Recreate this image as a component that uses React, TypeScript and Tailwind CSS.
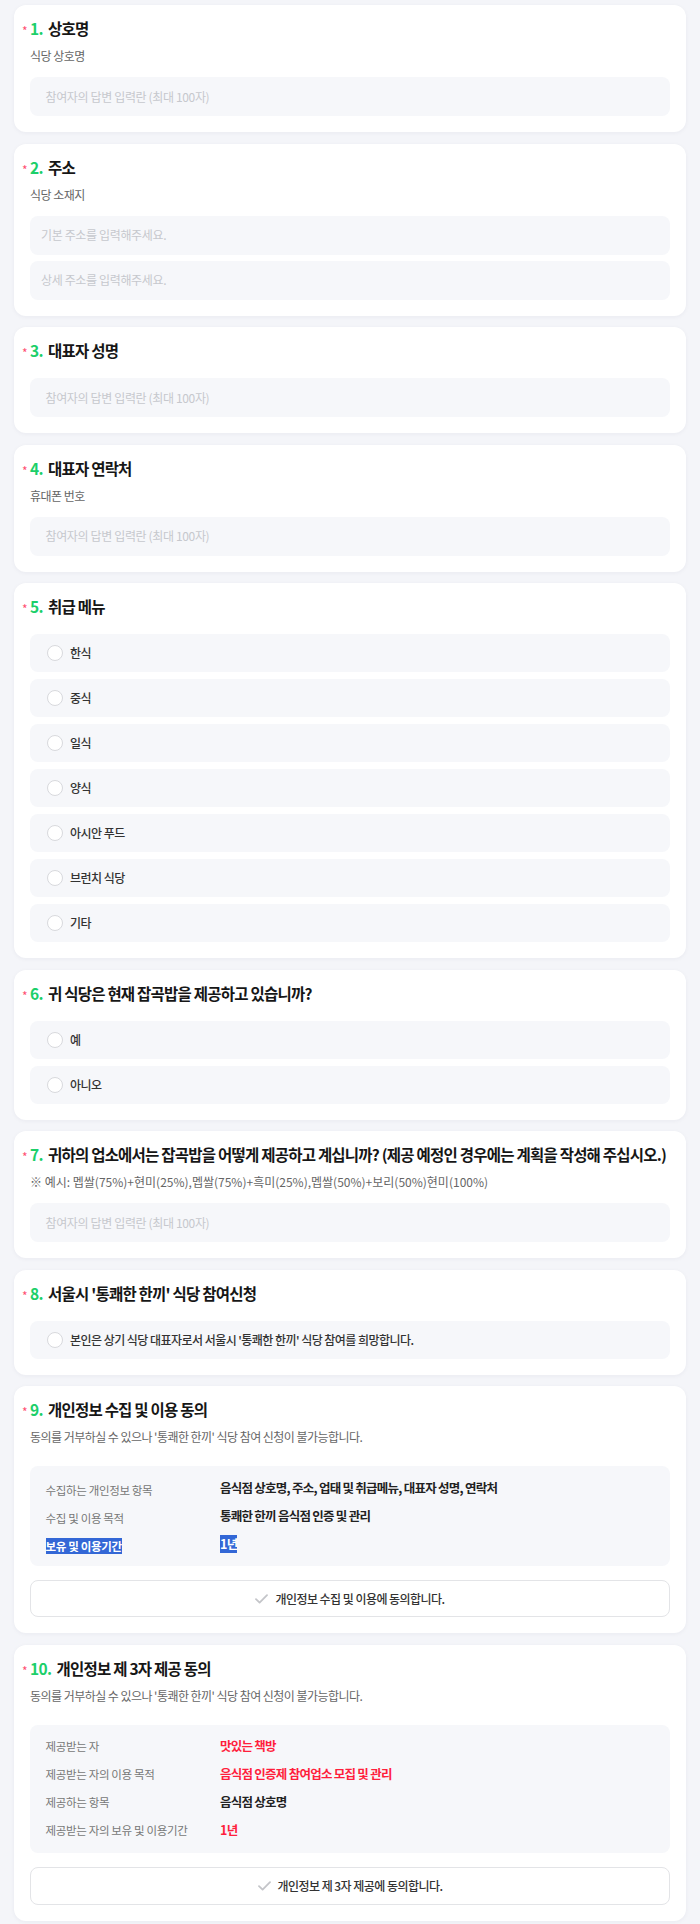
import React from "react";

const FONT = "font-['Noto_Sans_CJK_KR','Noto_Sans_KR',sans-serif]";

const menus = ["한식", "중식", "일식", "양식", "아시안 푸드", "브런치 식당", "기타"];

const privacyRows = [
  { label: "수집하는 개인정보 항목", value: "음식점 상호명, 주소, 업태 및 취급메뉴, 대표자 성명, 연락처" },
  { label: "수집 및 이용 목적", value: "통쾌한 한끼 음식점 인증 및 관리" },
  { label: "보유 및 이용기간", value: "1년", selected: true },
];

const thirdRows = [
  { label: "제공받는 자", value: "맛있는 책방", red: true },
  { label: "제공받는 자의 이용 목적", value: "음식점 인증제 참여업소 모집 및 관리", red: true },
  { label: "제공하는 항목", value: "음식점 상호명" },
  { label: "제공받는 자의 보유 및 이용기간", value: "1년", red: true },
];

function Card({ children }: { children: React.ReactNode }) {
  return (
    <section className="bg-white rounded-xl shadow-[0_1px_4px_rgba(30,40,80,0.05)] px-4 pt-3 pb-4">
      {children}
    </section>
  );
}

function Title({ n, text }: { n: number; text: string }) {
  return (
    <div className="flex items-center h-6 -ml-2">
      <span className="w-2 text-[12px] leading-none text-[#ff4f72] pt-[4px]">*</span>
      <span className="text-[15.5px] font-bold text-[#1ccf6a] tracking-[-0.04em]">{n}.</span>
      <span className="ml-[5px] text-[15.5px] font-bold text-[#161616] tracking-[-0.05em]">{text}</span>
    </div>
  );
}

function Sub({ text, wide }: { text: string; wide?: boolean }) {
  return (
    <p className={`mt-[5px] h-5 leading-5 text-[12px] text-[#666] ${wide ? "tracking-normal" : "tracking-[-0.045em]"}`}>
      {text}
    </p>
  );
}

function Input({ text, pad = "px-[15.5px]" }: { text: string; pad?: string }) {
  return (
    <div className={`h-[39px] rounded-lg bg-[#f6f7fa] flex items-center ${pad} text-[12px] text-[#c6c8cd] tracking-[-0.03em]`}>
      {text}
    </div>
  );
}

function Option({ label }: { label: string }) {
  return (
    <div className="h-[38px] rounded-lg bg-[#f6f7fa] flex items-center pl-[17px]">
      <span className="w-4 h-4 rounded-full border border-[#d8d9dd] bg-white shrink-0" />
      <span className="ml-[7px] text-[12px] font-medium text-[#333] tracking-[-0.045em]">{label}</span>
    </div>
  );
}

function Check() {
  return (
    <svg width="13" height="10" viewBox="0 0 13 10" fill="none">
      <path d="M1 5.2 4.6 8.6 12 1.2" stroke="#c4c5c9" strokeWidth="1.8" strokeLinecap="round" strokeLinejoin="round" />
    </svg>
  );
}

function AgreeButton({ text, tall }: { text: string; tall?: boolean }) {
  return (
    <div className={`mt-[14px] ${tall ? "h-[38px]" : "h-[37px]"} rounded-lg border border-[#e3e4e7] flex items-center justify-center gap-[7px]`}>
      <Check />
      <span className="text-[12px] font-medium text-[#333] tracking-[-0.045em]">{text}</span>
    </div>
  );
}

export default function App() {
  return (
    <main className={`min-h-[1924px] bg-[#f4f5f9] px-[14px] pt-[5px] ${FONT}`}>
      <div className="flex flex-col gap-[11.5px]">
        {/* 1 */}
        <Card>
          <Title n={1} text="상호명" />
          <Sub text="식당 상호명" />
          <div className="mt-[11px]">
            <Input text="참여자의 답변 입력란 (최대 100자)" />
          </div>
        </Card>

        {/* 2 */}
        <Card>
          <Title n={2} text="주소" />
          <Sub text="식당 소재지" />
          <div className="mt-[11px] flex flex-col gap-[6px]">
            <Input text="기본 주소를 입력해주세요." pad="px-[11px]" />
            <Input text="상세 주소를 입력해주세요." pad="px-[11px]" />
          </div>
        </Card>

        {/* 3 */}
        <Card>
          <Title n={3} text="대표자 성명" />
          <div className="mt-[15px]">
            <Input text="참여자의 답변 입력란 (최대 100자)" />
          </div>
        </Card>

        {/* 4 */}
        <Card>
          <Title n={4} text="대표자 연락처" />
          <Sub text="휴대폰 번호" />
          <div className="mt-[11px]">
            <Input text="참여자의 답변 입력란 (최대 100자)" />
          </div>
        </Card>

        {/* 5 */}
        <Card>
          <Title n={5} text="취급 메뉴" />
          <div className="mt-[15px] flex flex-col gap-[7px]">
            {menus.map((m) => (
              <Option key={m} label={m} />
            ))}
          </div>
        </Card>

        {/* 6 */}
        <Card>
          <Title n={6} text="귀 식당은 현재 잡곡밥을 제공하고 있습니까?" />
          <div className="mt-[15px] flex flex-col gap-[7px]">
            <Option label="예" />
            <Option label="아니오" />
          </div>
        </Card>

        {/* 7 */}
        <Card>
          <Title n={7} text="귀하의 업소에서는 잡곡밥을 어떻게 제공하고 계십니까? (제공 예정인 경우에는 계획을 작성해 주십시오.)" />
          <Sub wide text="※ 예시: 멥쌀(75%)+현미(25%),멥쌀(75%)+흑미(25%),멥쌀(50%)+보리(50%)현미(100%)" />
          <div className="mt-[11px]">
            <Input text="참여자의 답변 입력란 (최대 100자)" />
          </div>
        </Card>

        {/* 8 */}
        <Card>
          <Title n={8} text="서울시 '통쾌한 한끼' 식당 참여신청" />
          <div className="mt-[15px]">
            <Option label="본인은 상기 식당 대표자로서 서울시 '통쾌한 한끼' 식당 참여를 희망합니다." />
          </div>
        </Card>

        {/* 9 */}
        <Card>
          <Title n={9} text="개인정보 수집 및 이용 동의" />
          <Sub text="동의를 거부하실 수 있으나 '통쾌한 한끼' 식당 참여 신청이 불가능합니다." />
          <div className="mt-[19px] rounded-lg bg-[#f6f7fa] py-2 px-[15.5px]">
            {privacyRows.map((r) => (
              <div key={r.label} className="h-7 flex items-center">
                <span className="w-[174.5px] shrink-0">
                  <span className={`text-[11.5px] tracking-[-0.03em] ${r.selected ? "bg-[#3367d6] text-white font-semibold" : "text-[#777]"}`}>
                    {r.label}
                  </span>
                </span>
                <span className={`text-[12.5px] font-semibold tracking-[-0.06em] ${r.selected ? "bg-[#3367d6] text-white" : "text-[#222]"}`}>
                  {r.value}
                </span>
              </div>
            ))}
          </div>
          <AgreeButton text="개인정보 수집 및 이용에 동의합니다." />
        </Card>

        {/* 10 */}
        <Card>
          <Title n={10} text="개인정보 제 3자 제공 동의" />
          <Sub text="동의를 거부하실 수 있으나 '통쾌한 한끼' 식당 참여 신청이 불가능합니다." />
          <div className="mt-[19px] rounded-lg bg-[#f6f7fa] py-2 px-[15.5px]">
            {thirdRows.map((r) => (
              <div key={r.label} className="h-7 flex items-center">
                <span className="w-[174.5px] shrink-0 text-[11.5px] text-[#777] tracking-[-0.03em]">{r.label}</span>
                <span className={`text-[12.5px] font-semibold tracking-[-0.06em] ${r.red ? "text-[#ff1e3c]" : "text-[#222]"}`}>
                  {r.value}
                </span>
              </div>
            ))}
          </div>
          <AgreeButton text="개인정보 제 3자 제공에 동의합니다." tall />
        </Card>
      </div>
    </main>
  );
}
